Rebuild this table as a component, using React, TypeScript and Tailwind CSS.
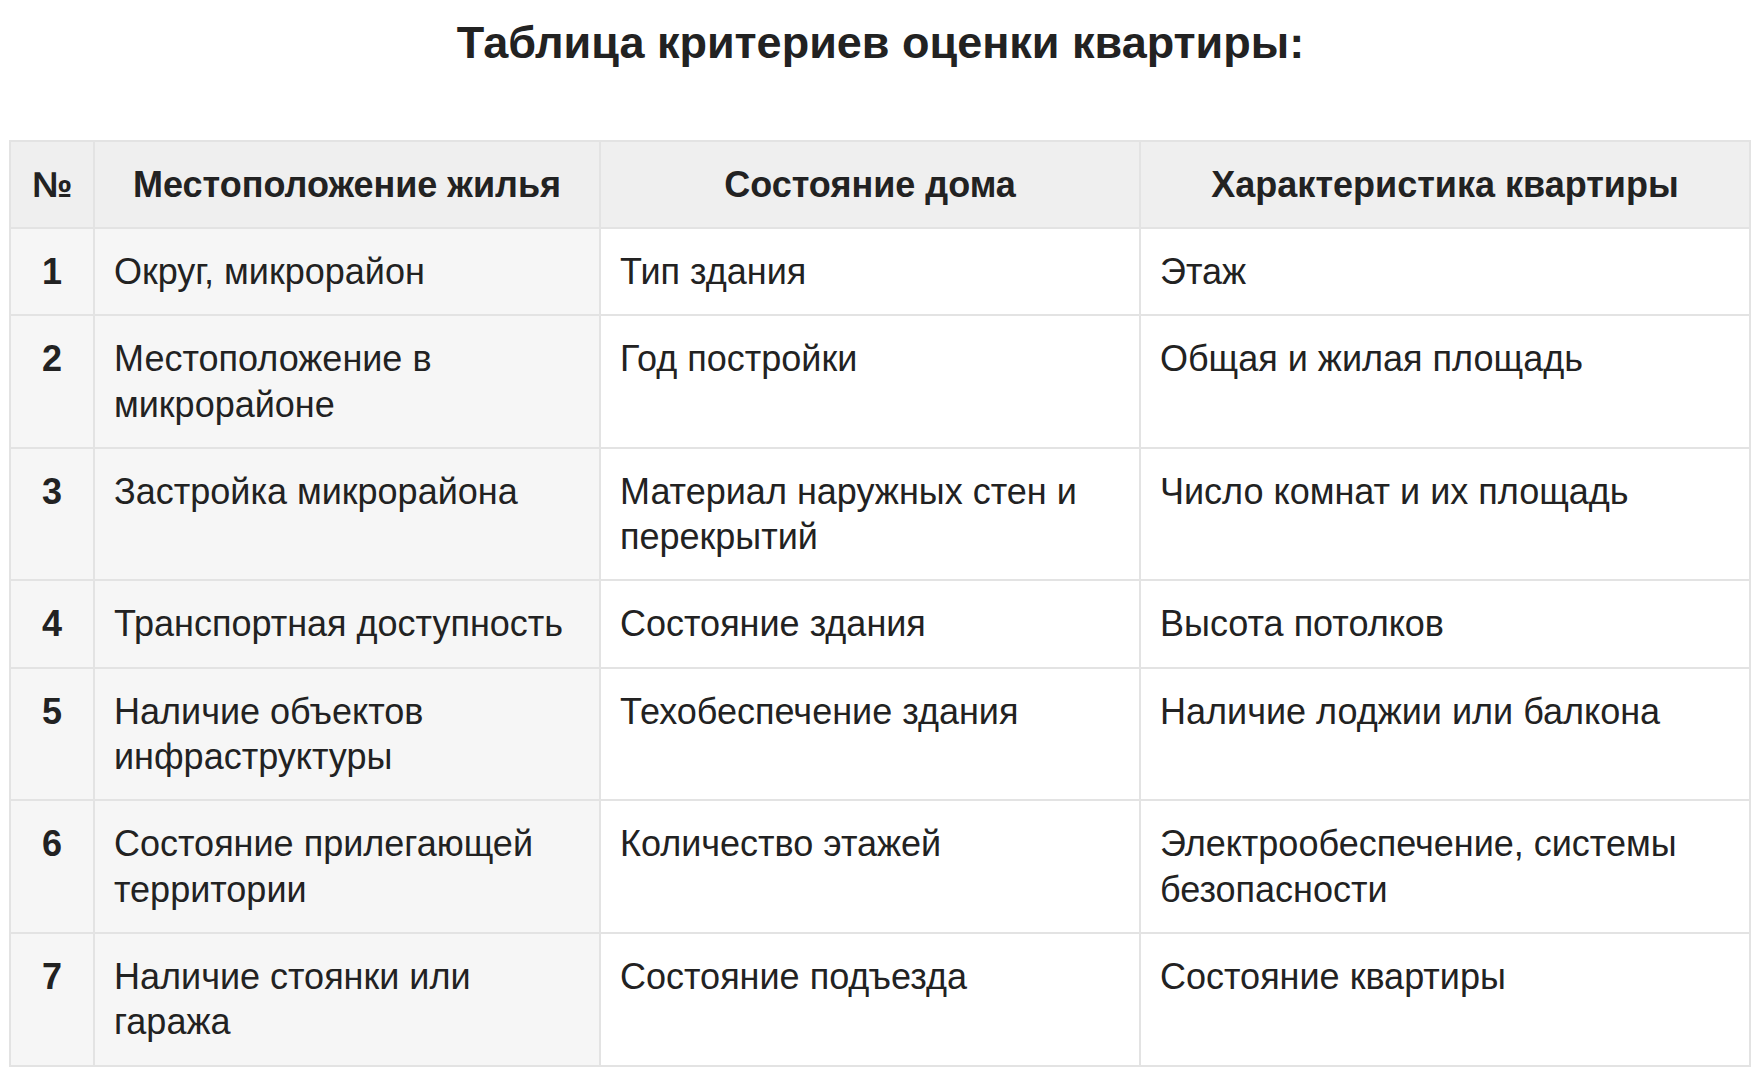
const rows: [string, string, string, string][] = [
  ['1', 'Округ, микрорайон', 'Тип здания', 'Этаж'],
  ['2', 'Местоположение в микрорайоне', 'Год постройки', 'Общая и жилая площадь'],
  ['3', 'Застройка микрорайона', 'Материал наружных стен и перекрытий', 'Число комнат и их площадь'],
  ['4', 'Транспортная доступность', 'Состояние здания', 'Высота потолков'],
  ['5', 'Наличие объектов инфраструктуры', 'Техобеспечение здания', 'Наличие лоджии или балкона'],
  ['6', 'Состояние прилегающей территории', 'Количество этажей', 'Электрообеспечение, системы безопасности'],
  ['7', 'Наличие стоянки или гаража', 'Состояние подъезда', 'Состояние квартиры'],
];

export default function App() {
  return (
    <div className="min-h-[1080px] bg-white text-[#222] font-['Liberation_Sans',Arial,sans-serif]">
      <h2 className="pt-[17px] text-center text-[45px] font-bold leading-[52px] text-[#222]">
        Таблица критериев оценки квартиры:
      </h2>
      <div className="mt-[71px] pl-[9px]">
        <table className="w-[1740px] table-fixed border-collapse text-[36px] leading-[45.3px]">
          <colgroup>
            <col className="w-[84px]" />
            <col className="w-[506px]" />
            <col className="w-[540px]" />
            <col className="w-[610px]" />
          </colgroup>
          <thead>
            <tr className="h-[87px] bg-[#efefef]">
              <th className="border-2 border-[#e3e3e3] px-[10px] text-center font-bold">№</th>
              <th className="border-2 border-[#e3e3e3] px-[10px] text-center font-bold">Местоположение жилья</th>
              <th className="border-2 border-[#e3e3e3] px-[10px] text-center font-bold">Состояние дома</th>
              <th className="border-2 border-[#e3e3e3] px-[10px] text-center font-bold">Характеристика квартиры</th>
            </tr>
          </thead>
          <tbody>
            {rows.map((r) => (
              <tr key={r[0]}>
                <td className="border-2 border-[#e3e3e3] bg-[#f6f6f6] py-[20px] text-center align-top font-bold">{r[0]}</td>
                <td className="border-2 border-[#e3e3e3] bg-[#f6f6f6] py-[20px] pl-[19px] pr-[8px] align-top">{r[1]}</td>
                <td className="border-2 border-[#e3e3e3] bg-white py-[20px] pl-[19px] pr-[8px] align-top">{r[2]}</td>
                <td className="border-2 border-[#e3e3e3] bg-white py-[20px] pl-[19px] pr-[8px] align-top">{r[3]}</td>
              </tr>
            ))}
          </tbody>
        </table>
      </div>
    </div>
  );
}
